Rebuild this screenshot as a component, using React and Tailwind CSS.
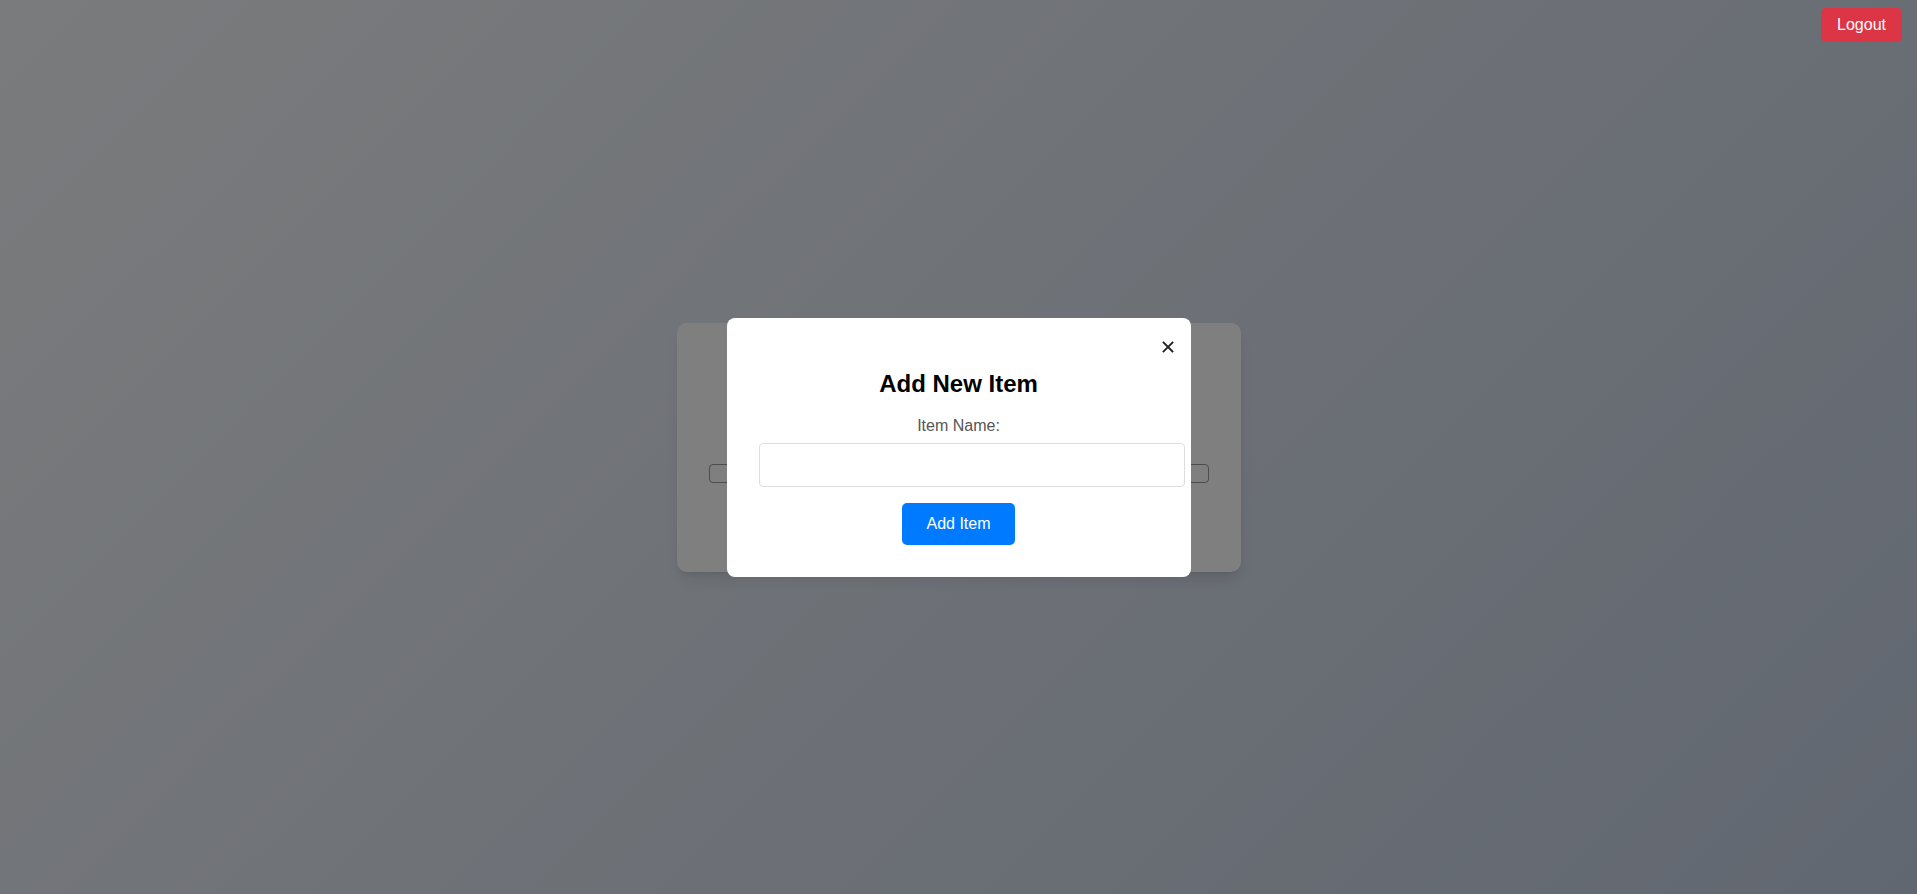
import { useState } from "react";

function CloseIcon() {
  return (
    <svg width="12" height="12" viewBox="0 0 12 12" fill="none">
      <path d="M1.5 1.5L10.5 10.5M10.5 1.5L1.5 10.5" stroke="#222" strokeWidth="1.8" strokeLinecap="square" />
    </svg>
  );
}

export default function App() {
  const [name, setName] = useState("");

  return (
    <div
      className="relative min-h-screen flex items-center justify-center bg-[linear-gradient(135deg,#f5f7fa_0%,#c3cfe2_100%)]"
      style={{ fontFamily: '"Liberation Sans", Arial, sans-serif' }}
    >
      <button className="absolute top-2 right-[15px] z-20 bg-[#dc3545] text-white text-base leading-[18px] px-4 py-2 rounded-[5px]">
        Logout
      </button>

      {/* page card behind the modal */}
      <div className="w-[564px] h-[249px] bg-white rounded-[10px] shadow-lg px-8 pt-[141px]">
        <div className="w-[500px] h-[19px] border border-[#999] rounded-[4px]" />
      </div>

      {/* modal overlay */}
      <div className="fixed inset-0 z-10 bg-black/50 flex items-center justify-center">
        <div className="relative w-[464px] bg-white rounded-[8px] p-8 text-center">
          <button className="absolute top-[23px] right-[17px] p-0 leading-none">
            <CloseIcon />
          </button>
          <h2 className="mt-[20px] mb-[19px] text-2xl leading-7 font-bold text-black">
            Add New Item
          </h2>
          <label className="block mb-2 text-base leading-[18px] text-[#555]">
            Item Name:
          </label>
          <input
            value={name}
            onChange={(e) => setName(e.target.value)}
            className="box-content w-full block p-3 text-base leading-[18px] border border-[#ddd] rounded-[4px] outline-none"
          />
          <button className="mt-4 bg-[#007bff] text-white text-base leading-[18px] px-6 py-3 rounded-[5px]">
            Add Item
          </button>
        </div>
      </div>
    </div>
  );
}
